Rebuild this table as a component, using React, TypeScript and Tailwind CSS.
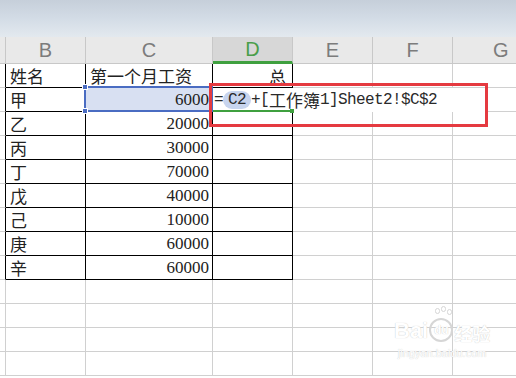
import React from 'react';

const CJK = { fontFamily: "'Noto Sans CJK SC', sans-serif" };
const SERIF = { fontFamily: "'Liberation Serif', 'Noto Sans CJK SC', serif" };
const MONO = { fontFamily: "'Liberation Mono', monospace" };
const SANS = { fontFamily: "'Liberation Sans', sans-serif" };

const people: [string, number][] = [
  ['甲', 6000],
  ['乙', 20000],
  ['丙', 30000],
  ['丁', 70000],
  ['戊', 40000],
  ['己', 10000],
  ['庚', 60000],
  ['辛', 60000],
];

// grid cell with the usual right / bottom rule
function Cell({
  w,
  dark = false,
  children,
  className = '',
}: {
  w: string;
  dark?: boolean;
  children?: React.ReactNode;
  className?: string;
}) {
  return (
    <div
      className={`${w} h-full shrink-0 border-r border-b box-border flex items-center ${
        dark ? 'border-black' : 'border-[#d0d0d0]'
      } ${className}`}
    >
      {children}
    </div>
  );
}

function HeaderCell({ w, label, active = false }: { w: string; label: string; active?: boolean }) {
  return (
    <div
      className={`${w} h-full shrink-0 box-border border-r border-[#c8c8c8] flex items-center justify-center text-[20px] ${
        active
          ? 'bg-[#d7d7d7] text-[#4a9e4a] border-b-[3px] border-b-[#3fa03f]'
          : 'bg-[#e9e9e9] text-[#7c7c7c] border-b border-b-[#c8c8c8]'
      }`}
      style={SANS}
    >
      {label}
    </div>
  );
}

function Formula() {
  return (
    <div className="absolute left-0 top-0 h-[24px] w-[272px] bg-white z-10 flex items-center text-[16px] leading-[18px] text-[#2a2a2a] tracking-[-0.6px]">
      <span className="pl-[1px]" style={MONO}>=</span>
      <span className="bg-[#c7d4ee] rounded-full px-[5px]" style={MONO}>C2</span>
      <span style={MONO}>+[</span>
      <span className="text-[17px] leading-[18px] tracking-normal" style={CJK}>工作簿</span>
      <span style={MONO}>1]Sheet2!$C$2</span>
    </div>
  );
}

export default function App() {
  return (
    <div className="relative w-[516px] h-[378px] overflow-hidden bg-white">
      {/* toolbar remnant */}
      <div className="h-[37px] bg-gradient-to-b from-[#c6cfda] via-[#d3dce6] to-[#e3e9ef]" />

      {/* column headers */}
      <div className="flex h-[27px]">
        <div className="w-[6px] h-full shrink-0 box-border border-r border-b border-[#c8c8c8] bg-[#e9e9e9]" />
        <HeaderCell w="w-[80px]" label="B" />
        <HeaderCell w="w-[127px]" label="C" />
        <HeaderCell w="w-[80px]" label="D" active />
        <HeaderCell w="w-[80px]" label="E" />
        <HeaderCell w="w-[80px]" label="F" />
        <div className="flex-1 h-full box-border border-b border-[#c8c8c8] bg-[#e9e9e9] flex items-center pl-[40px] text-[20px] text-[#7c7c7c]" style={SANS}>
          G
        </div>
      </div>

      {/* row 1 : titles */}
      <div className="flex h-[24px] text-[17px] text-[#222]">
        <Cell w="w-[6px]" className="!border-r-black" />
        <Cell w="w-[80px]" dark className="pl-[4px]">
          <span style={CJK}>姓名</span>
        </Cell>
        <Cell w="w-[127px]" dark className="pl-[4px]">
          <span style={CJK}>第一个月工资</span>
        </Cell>
        <Cell w="w-[80px]" dark className="justify-end pr-[6px]">
          <span className="leading-none translate-y-[1px]" style={CJK}>总</span>
        </Cell>
        <Cell w="w-[80px]" />
        <Cell w="w-[80px]" />
        <div className="flex-1 h-full border-b border-[#d0d0d0]" />
      </div>

      {people.map(([name, pay], i) => (
        <div key={name} className="flex h-[24px] text-[17px] text-[#222]">
          <Cell w="w-[6px]" className="!border-r-black" />
          <Cell w="w-[80px]" dark className="pl-[4px]">
            <span style={CJK}>{name}</span>
          </Cell>
          {i === 0 ? (
            <div className="relative w-[127px] h-full shrink-0 box-border border-r border-b border-black bg-[#d8e0f2] flex items-center justify-end pr-[3px]">
              <span style={SERIF}>{pay}</span>
              <div className="absolute -left-[2px] -top-[2px] -right-[1px] -bottom-[1px] border-2 border-[#4a6cc2]" />
              <div className="absolute -left-[4px] -top-[4px] w-[6px] h-[6px] bg-[#4a6cc2] border border-white" />
              <div className="absolute -left-[4px] -bottom-[3px] w-[6px] h-[6px] bg-[#4a6cc2] border border-white" />
            </div>
          ) : (
            <Cell w="w-[127px]" dark className="justify-end pr-[3px]">
              <span style={SERIF}>{pay}</span>
            </Cell>
          )}
          {i === 0 ? (
            <div className="relative w-[80px] h-full shrink-0 box-border border-r border-b border-black">
              <Formula />
              <div className="absolute left-0 -bottom-[1px] w-[78px] h-[2px] bg-[#3fa03f] z-10" />
              <div className="absolute -right-[2px] -bottom-[2px] w-[4px] h-[4px] bg-[#3fa03f] z-10" />
            </div>
          ) : (
            <Cell w="w-[80px]" dark />
          )}
          <Cell w="w-[80px]" />
          <Cell w="w-[80px]" />
          <div className="flex-1 h-full border-b border-[#d0d0d0]" />
        </div>
      ))}

      {[0, 1, 2, 3].map((r) => (
        <div key={r} className="flex h-[24px]">
          <Cell w="w-[6px]" />
          <Cell w="w-[80px]" />
          <Cell w="w-[127px]" />
          <Cell w="w-[80px]" />
          <Cell w="w-[80px]" />
          <Cell w="w-[80px]" />
          <div className="flex-1 h-full border-b border-[#d0d0d0]" />
        </div>
      ))}

      {/* red annotation box */}
      <div className="absolute left-[209px] top-[83px] w-[279px] h-[44px] border-[3px] border-[#e53a40] z-20" />

      {/* watermark */}
      <div className="absolute left-[394px] top-[318px] flex flex-col items-center text-white z-20 [text-shadow:0_0_1px_#bdbdbd]">
        <div className="flex items-end gap-[1px] leading-none" style={SANS}>
          <span className="text-[22px] font-bold">Bai</span>
          <span className="relative w-[24px] h-[24px] rounded-full border-2 border-[#d6d6d6] text-[12px] font-bold flex items-center justify-center">
            du
            <span className="absolute -top-[12px] left-[4px] w-[5px] h-[6px] rounded-full border border-[#d6d6d6]" />
            <span className="absolute -top-[14px] left-[10px] w-[5px] h-[6px] rounded-full border border-[#d6d6d6]" />
            <span className="absolute -top-[11px] left-[16px] w-[5px] h-[6px] rounded-full border border-[#d6d6d6]" />
          </span>
          <span className="text-[18px] font-bold" style={CJK}>经验</span>
        </div>
        <div className="text-[11px] mt-[3px]" style={SANS}>jingyan.baidu.com</div>
      </div>
    </div>
  );
}
